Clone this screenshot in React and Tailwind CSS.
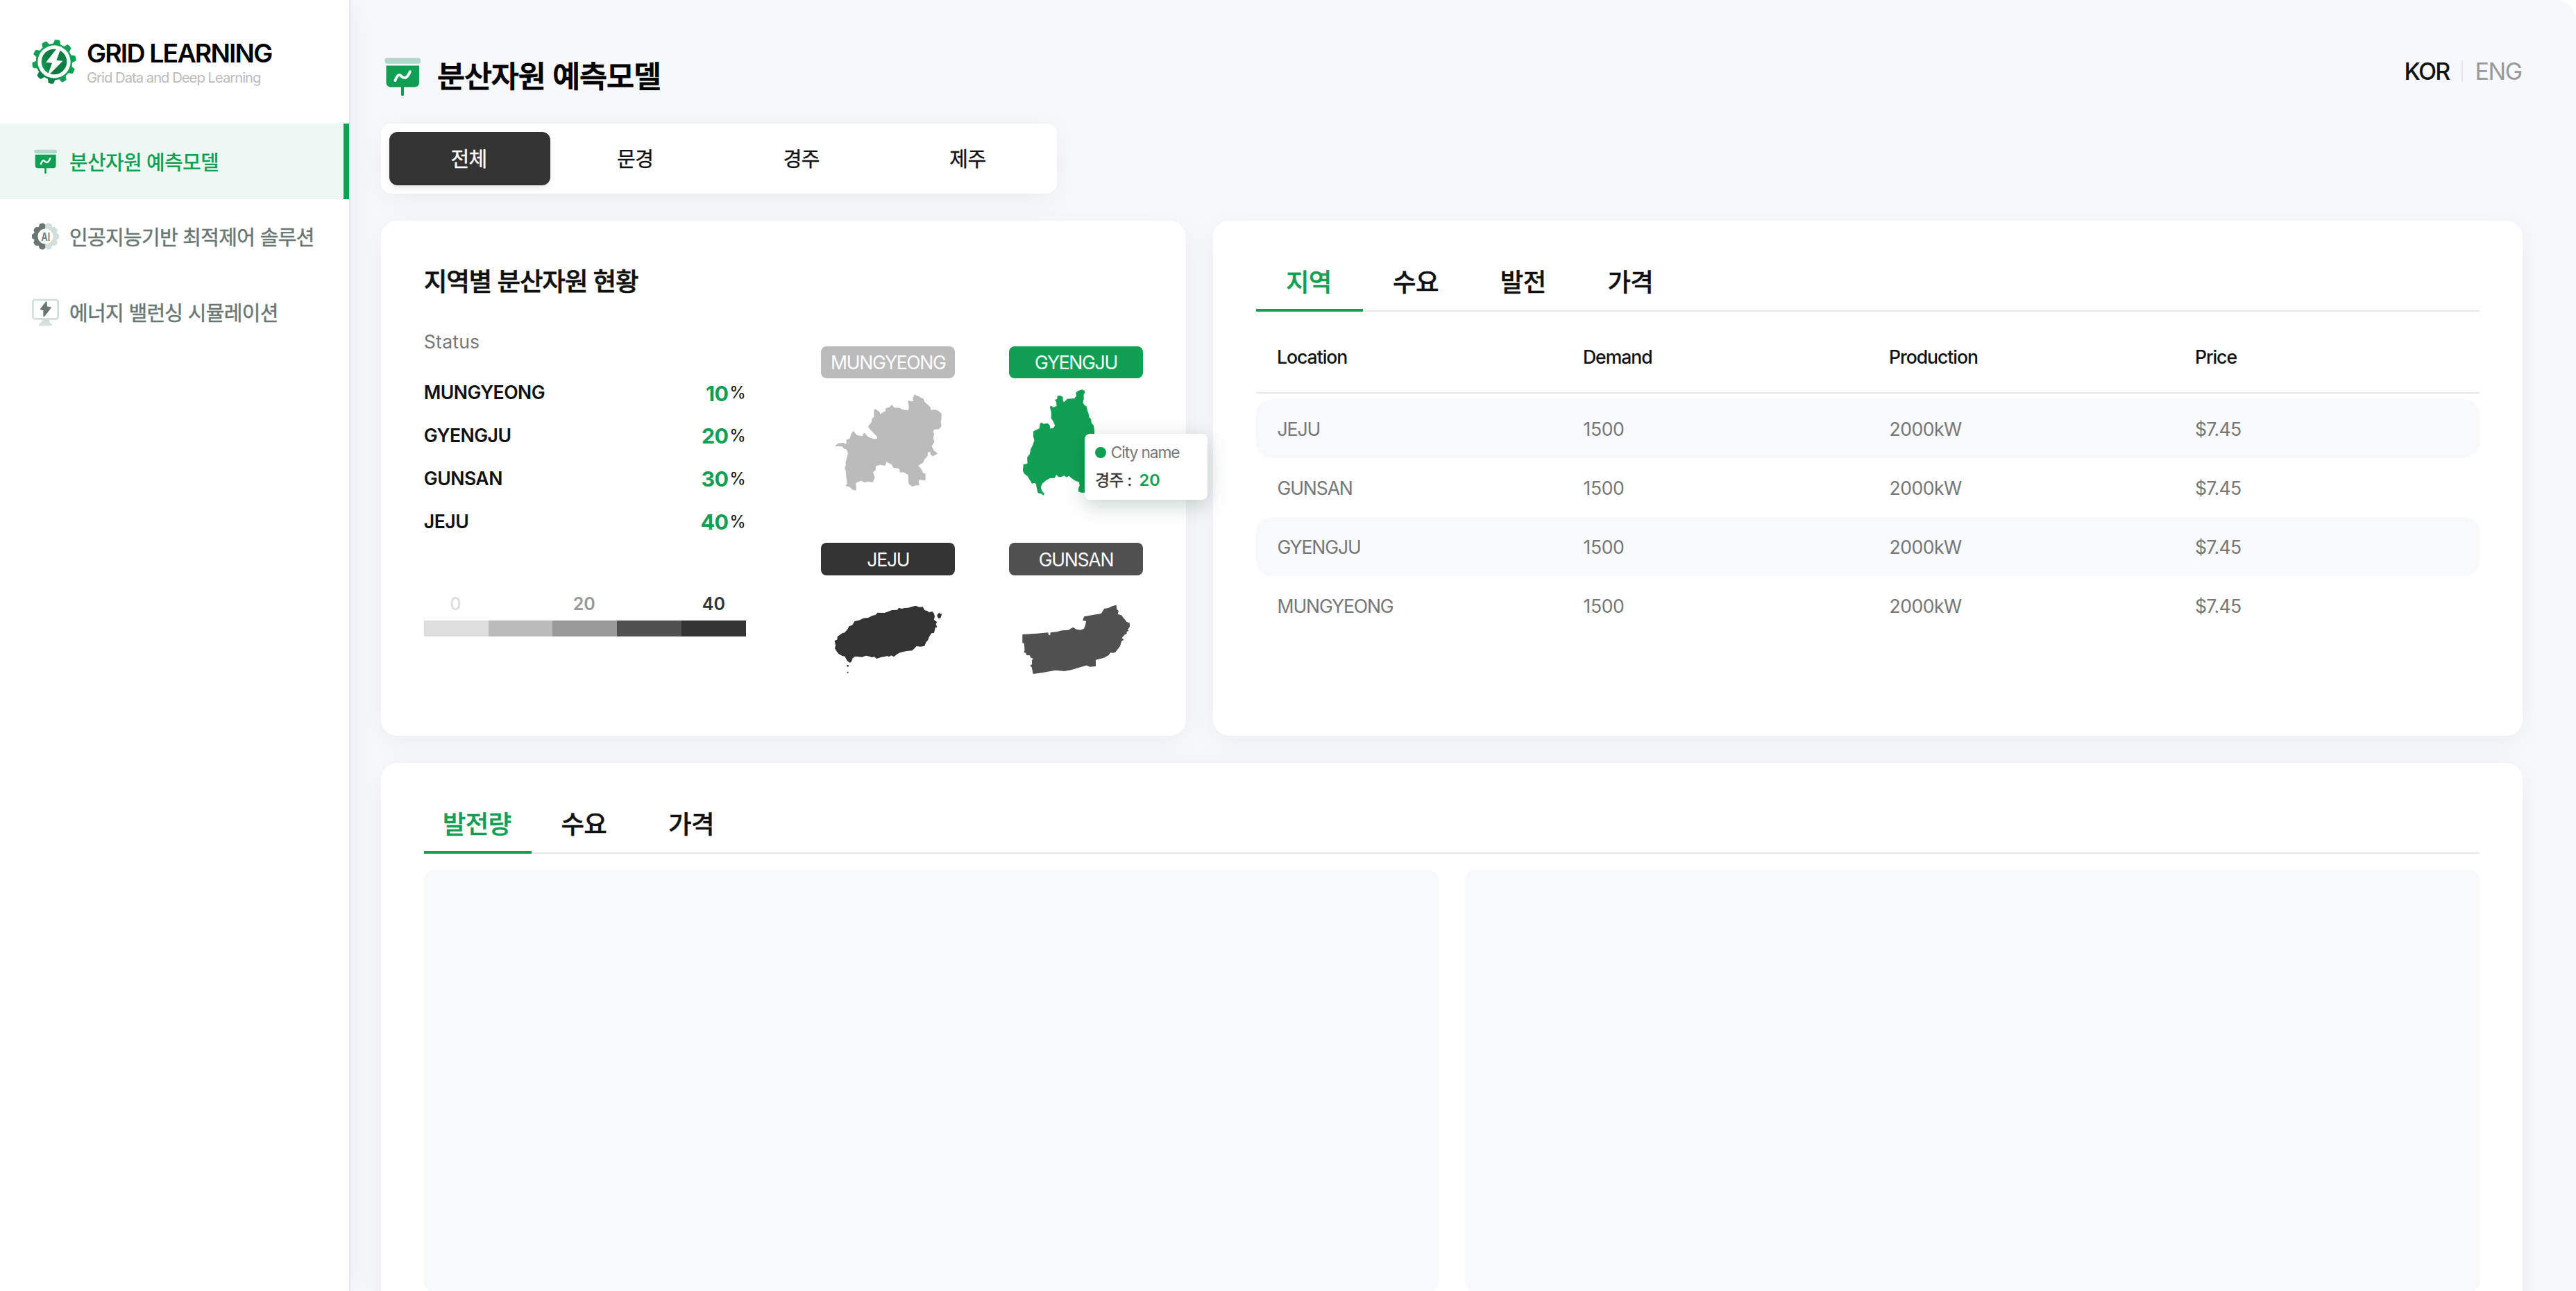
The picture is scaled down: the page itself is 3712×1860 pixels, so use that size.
import React from "react";

const REGIONS = [
  { name: "MUNGYEONG", value: 10 },
  { name: "GYENGJU", value: 20 },
  { name: "GUNSAN", value: 30 },
  { name: "JEJU", value: 40 },
];

const ROWS = ["JEJU", "GUNSAN", "GYENGJU", "MUNGYEONG"];

function BoardIcon({ className }) {
  return (
    <svg viewBox="0 0 24 24" className={className} fill="none">
      <rect x="2.1" y="1.7" width="20" height="3.2" rx="1.2" fill="#b3d7cb" />
      <path d="M2.9 6h18.4v9.6a2.4 2.4 0 0 1-2.4 2.4H5.3a2.4 2.4 0 0 1-2.4-2.4Z" fill="#11a053" />
      <path d="M12 17.5v4.6" stroke="#11a053" strokeWidth="1.6" strokeLinecap="round" />
      <path d="M7.9 14.3c1-2.6 2-3.800 3.200-2.700c1.800 2 3.400 1.800 5.100-2.200" stroke="#fff" strokeWidth="1.500" strokeLinecap="round" strokeLinejoin="round" />
    </svg>
  );
}

const TEETH = [0, 36, 72, 108, 144, 180, 216, 252, 288, 324];

function LogoIcon({ className }) {
  return (
    <svg viewBox="-96 -96 192 192" className={className}>
      <defs>
        <linearGradient id="logo-gear" gradientUnits="userSpaceOnUse" x1="-40" y1="90" x2="10" y2="-20">
          <stop offset="0" stopColor="#0b7a40" />
          <stop offset="0.45" stopColor="#129f54" />
          <stop offset="1" stopColor="#0f9f50" />
        </linearGradient>
        <linearGradient id="logo-core" x1="0" y1="0.7" x2="1" y2="0.3">
          <stop offset="0" stopColor="#12a053" />
          <stop offset="0.35" stopColor="#0b7a40" />
          <stop offset="1" stopColor="#0d8044" />
        </linearGradient>
      </defs>
      <circle r="79" fill="url(#logo-gear)" />
      {TEETH.map((a) => (
        <path
          key={a}
          transform={`rotate(${a + 8.5})`}
          d="M-17-74L-11-94Q0-97 11-94L17-74Z"
          fill={a === 180 || a === 216 ? "#0c8145" : "#11a053"}
        />
      ))}
      <circle r="71" fill="#fff" />
      <circle r="55" fill="url(#logo-core)" />
      <path d="M18-66L-36 3L-9 5L-30 64L38-4L10-6L32-66Z" fill="#fff" />
    </svg>
  );
}

function AiIcon({ className }) {
  return (
    <svg viewBox="-58.5 -58.5 117 117" className={className}>
      <defs>
        <clipPath id="ai-left"><rect x="-60" y="-60" width="60" height="120" /></clipPath>
        <clipPath id="ai-right"><rect x="0" y="-60" width="60" height="120" /></clipPath>
      </defs>
      {[["url(#ai-left)", "#6b7672"], ["url(#ai-right)", "#d2deda"]].map(([clip, color]) => (
        <g key={color} clipPath={clip} fill={color}>
          <circle r="50" />
          {TEETH.map((a) => (
            <path key={a} transform={`rotate(${a + 18})`} d="M-16-46L-9-57Q0-61 9-57L16-46Z" />
          ))}
        </g>
      ))}
      <circle r="33" fill="#fff" />
      <text x="-18" y="18" fontSize="48" fontWeight="600" textLength="38" lengthAdjust="spacingAndGlyphs" fill="#6b7672">AI</text>
    </svg>
  );
}

function MonitorIcon({ className }) {
  return (
    <svg viewBox="138 1288 117 117" className={className}>
      <rect x="142" y="1294" width="109" height="82" rx="9" fill="none" stroke="#d2deda" strokeWidth="8" />
      <path d="M182 1378h30q1 16 8 18q5 1 5 5v4h-57v-4q0-4 5-5q8-2 9-18Z" fill="#d2deda" />
      <path d="M200 1304L177 1334L190 1337L190 1364L218 1328L201 1325Z" fill="#6b7672" stroke="#6b7672" strokeWidth="6" strokeLinejoin="round" />
    </svg>
  );
}

function NavItem({ icon: Icon, label, active }) {
  return (
    <li
      className={
        active
          ? "flex h-[108.3px] items-center gap-[15px] border-r-8 border-[#11a053] bg-[#edf7f4] pl-[46px] font-medium text-[#11a053]"
          : "flex h-[108.3px] items-center gap-[15px] pl-[46px] text-[#6b7773] [-webkit-text-stroke:0.5px]"
      }
    >
      <Icon className="size-[39px]" />
      <span className="pt-[5px] text-[29px] leading-10 tracking-[-0.7px] whitespace-nowrap">{label}</span>
    </li>
  );
}

function Tabs({ items }) {
  return (
    <div className="flex h-[69.6px] border-b-2 border-[#e6e6ee]">
      {items.map((label, i) => (
        <div
          key={label}
          className={
            i === 0
              ? "-mb-[2px] w-[154.67px] border-b-4 border-[#11a053] pr-[2px] text-center text-[36.5px] leading-[55px] font-medium tracking-[-0.7px] text-[#11a053] [-webkit-text-stroke:0.4px]"
              : "w-[154.67px] pr-[3px] text-center text-[36.5px] leading-[55px] font-medium tracking-[-0.7px] text-[#111] [-webkit-text-stroke:0.4px]"
          }
        >
          {label}
        </div>
      ))}
    </div>
  );
}

function Badge({ className, children }) {
  return (
    <div className={`flex h-[46.4px] items-center justify-center rounded-[8px] pt-[2px] text-[26.6px] tracking-[-1.3px] text-white ${className}`}>
      {children}
    </div>
  );
}

function Tooltip() {
  return (
    <div className="absolute top-[126px] left-[109px] z-10 h-[95px] w-[177.5px] rounded-[8px] bg-white pt-[11px] pl-[15.5px] shadow-[0_8px_30px_rgba(0,60,40,0.22)]">
      <div className="flex h-8 items-center gap-[7px]">
        <span className="size-[15.5px] rounded-full bg-[#11a053]" />
        <span className="text-[22.8px] tracking-[-1.13px] text-[#777]">City name</span>
      </div>
      <div className="flex h-[48px] items-center text-[22.5px] text-[#333]">
        <span className="tracking-[-0.5px] [-webkit-text-stroke:0.4px]">경주 :</span>
        <span className="ml-[11px] text-[23.5px] font-semibold text-[#11a053]">20</span>
      </div>
    </div>
  );
}

function RegionMaps() {
  return (
    <div className="mt-[63px] ml-[108.4px] grid grid-cols-[193.33px_193.33px] content-start gap-x-[77.33px] gap-y-[47px]">
      <div>
        <Badge className="bg-[#bbb]">MUNGYEONG</Badge>
        <svg viewBox="69 228 580 570" className="h-[190px] w-full" fill="#bbb">
          <path d="M474 297L482 303L492 305L500 312L512 316L517 330L530 342L543 353L544 365L560 363L576 368L591 382L589 408L587 415L590 435L580 448L558 450L554 458L558 470L555 487L559 503L548 522L557 540L573 552L567 558L552 565L543 558L541 546L531 548L530 564L516 580L510 593L489 606L503 620L511 639L521 640L521 670L493 667L491 677L495 690L480 691L464 696L448 685L446 645L425 634L411 635L407 618L383 615L374 601L352 589L346 606L325 602L307 607L305 625L294 634L302 658L293 677L270 674L258 679L243 671L220 680L221 714L204 709L195 699L175 693L182 683L178 650L176 627L172 617L177 600L175 594L186 552L180 536L170 533L160 523L129 521L143 509L165 507L175 512L180 506L178 495L195 487L198 473L208 455L225 474L248 478L256 463L272 481L295 490L311 490L312 481L274 442L275 432L287 419L289 402L298 396L298 366L305 361L323 374L326 385L334 376L347 371L350 357L366 353L375 342L385 355L410 356L420 363L447 367L449 350L444 325L468 328L466 312Z" />
        </svg>
      </div>
      <div className="relative">
        <Badge className="bg-[#11a053]">GYENGJU</Badge>
        <svg viewBox="70.5 228 580 570" className="h-[190px] w-full" fill="#11a053">
          <path d="M386 277L397 281L398 293L393 297L394 316L390 334L398 345L406 350L410 369L414 379L417 396L425 405L427 421L436 431L440 455L437 520L420 600L412 680L405 722L382 722L370 717L371 702L376 691L372 676L357 671L341 660L330 650L319 656L310 649L294 655L285 655L275 646L267 659L248 660L230 670L213 685L208 700L213 715L223 727L219 735L210 727L195 724L191 706L187 685L180 680L170 684L151 652L137 641L130 628L133 600L150 597L149 570L160 556L164 535L173 517L180 495L175 480L176 457L202 445L205 422L213 420L219 425L237 423L246 430L249 446L263 442L269 432L261 413L253 402L253 374L247 351L254 347L261 354L276 348L275 330L268 322L279 317L279 305L290 302L303 308L304 328L310 330L322 317L353 315L361 305L360 288L372 281Z" />
        </svg>
        <Tooltip />
      </div>
      <div>
        <Badge className="bg-[#333]">JEJU</Badge>
        <svg viewBox="64 206 541.33 510" preserveAspectRatio="none" className="h-[170px] w-full" fill="#333">
          <path d="M445 337L462 343L475 342L482 356L494 360L500 366L513 362L520 370L523 383L520 398L532 407L528 417L533 431L526 430L520 455L510 456L500 472L496 485L488 495L482 511L465 514L450 512L432 531L410 533L384 539L372 546L358 558L348 552L338 558L332 554L322 557L308 559L288 566L280 558L268 560L260 556L245 553L230 559L202 556L192 564L187 579L180 584L170 575L160 556L150 554L135 545L127 534L120 521L123 508L119 488L129 484L131 470L150 456L160 453L172 438L177 426L190 421L200 404L218 400L235 391L255 389L270 381L285 376L292 367L320 368L335 363L350 356L372 355L378 346L390 350L400 347L415 346L430 342Z" />
          <path d="M540 367L545 372L552 372L550 379L546 391L537 391L532 379Z" />
          <circle cx="172" cy="597" r="4" />
          <circle cx="172" cy="625" r="3" />
        </svg>
      </div>
      <div>
        <Badge className="bg-[#505050]">GUNSAN</Badge>
        <svg viewBox="822 206 541.33 510" preserveAspectRatio="none" className="h-[170px] w-full" fill="#505050">
          <path d="M1255 334L1257 352L1264 359L1261 374L1275 378L1297 407L1309 412L1309 428L1301 440L1305 446L1297 449L1297 459L1290 461L1277 477L1285 484L1276 490L1270 512L1251 538L1242 541L1231 540L1224 551L1205 562L1172 571L1172 599L1148 601L1135 595L1100 606L1075 614L1045 620L1010 616L970 624L945 628L919 632L914 604L907 595L915 590L914 574L919 565L910 562L905 551L893 551L890 541L882 539L885 530L883 501L876 496L876 461L935 457L980 453L982 464L988 464L989 453L1015 450L1036 444L1062 442L1080 430L1094 439L1110 442L1124 436L1130 421L1133 403L1119 401L1125 384L1160 377L1194 371L1206 350L1223 347L1240 338Z" />
        </svg>
      </div>
    </div>
  );
}

function StatusCard() {
  return (
    <section className="h-[742.4px] w-[1160px] rounded-[23px] bg-white px-[61.87px] pt-[58px] shadow-[0_8px_40px_rgba(17,17,17,0.05)]">
      <h2 className="text-[36.5px] leading-[61px] font-medium tracking-[-1.2px] text-[#111] [-webkit-text-stroke:0.6px]">지역별 분산자원 현황</h2>
      <div className="-mt-px flex">
        <div className="w-[464px] pt-[35.7px]">
          <p className="text-[26.6px] leading-10 tracking-[0.2px] text-[#777]">Status</p>
          <ul className="mt-[23.8px] text-[#111]">
            {REGIONS.map(({ name, value }) => (
              <li key={name} className="flex h-[61.87px] items-center justify-between">
                <span className="text-[26.6px] font-semibold tracking-[-0.55px]">{name}</span>
                <span className="flex items-center">
                  <span className="text-[30.5px] font-bold tracking-[-0.8px] text-[#11a053]">{value}</span>
                  <span className="ml-[2px] text-[24px]">%</span>
                </span>
              </li>
            ))}
          </ul>
          <div className="mt-[67px] grid grid-cols-5 text-center text-[25px] leading-10 font-semibold">
            <span className="pr-[2px] font-medium text-[#ddd]">0</span>
            <span className="col-start-3 pr-[2px] text-[#999]">20</span>
            <span className="col-start-5 text-[#333]">40</span>
          </div>
          <div className="mt-1 grid h-[23px] grid-cols-5">
            <span className="bg-[#ddd]" />
            <span className="bg-[#bbb]" />
            <span className="bg-[#999]" />
            <span className="bg-[#505050]" />
            <span className="bg-[#333]" />
          </div>
        </div>
        <RegionMaps />
      </div>
    </section>
  );
}

function TableCard() {
  return (
    <section className="h-[742.4px] flex-1 rounded-[23px] bg-white px-[61.87px] pt-[61.87px] shadow-[0_8px_40px_rgba(17,17,17,0.05)]">
      <Tabs items={["지역", "수요", "발전", "가격"]} />
      <div className="mt-[15.5px] grid h-[101.9px] grid-cols-4 items-center border-b-2 border-[#e6e6ee] pt-[1px] text-[26.6px] font-medium tracking-[-1.05px] text-[#111]">
        {["Location", "Demand", "Production", "Price"].map((h) => (
          <span key={h} className="pl-[30.5px]">{h}</span>
        ))}
      </div>
      <div className="mt-[7.7px] text-[26.6px] text-[#777]">
        {ROWS.map((name) => (
          <div key={name} className="grid h-[85.07px] grid-cols-4 items-center rounded-[23px] pt-[3px] odd:bg-[#f8f9fb]">
            <span className="pl-[31px] tracking-[-1.15px]">{name}</span>
            <span className="pl-[31px] tracking-[-0.4px]">1500</span>
            <span className="pl-[31px] tracking-[-0.5px]">2000kW</span>
            <span className="pl-[30.5px] tracking-[-0.6px]">$7.45</span>
          </div>
        ))}
      </div>
    </section>
  );
}

export default function App() {
  return (
    <div className="flex h-[1860px] w-[3712px] overflow-hidden bg-white font-[Inter,'Noto_Sans_CJK_KR',sans-serif]">
      <aside className="z-10 w-[505px] shrink-0 border-r-2 border-[#e6e6ee] bg-white shadow-[0_0_40px_rgba(17,17,17,0.06)]">
        <div className="flex h-[178.4px] gap-[15px] pt-[57px] pl-[46px]">
          <LogoIcon className="size-[64px] shrink-0" />
          <div className="whitespace-nowrap">
            <div className="text-[37.5px] leading-10 font-semibold tracking-[-1.85px] text-black">GRID LEARNING</div>
            <div className="text-[20.3px] leading-[30px] tracking-[-1.02px] text-[#bbb]">Grid Data and Deep Learning</div>
          </div>
        </div>
        <ul>
          <NavItem icon={BoardIcon} label="분산자원 예측모델" active />
          <NavItem icon={AiIcon} label="인공지능기반 최적제어 솔루션" />
          <NavItem icon={MonitorIcon} label="에너지 밸런싱 시뮬레이션" />
        </ul>
      </aside>

      <main className="flex-1 rounded-tr-[31px] bg-[#f7f8fb] pt-[78.6px] pr-[76.8px] pl-[44px]">
        <header className="flex items-start justify-between">
          <div className="flex h-[62px] items-center gap-[19px]">
            <BoardIcon className="size-[62px]" />
            <h1 className="text-[43.5px] leading-[60px] font-medium tracking-[-1.1px] text-black [-webkit-text-stroke:1px]">분산자원 예측모델</h1>
          </div>
          <div className="mt-1 flex items-center text-[34px] leading-10">
            <span className="font-medium tracking-[-1.8px] text-[#111]">KOR</span>
            <span className="mr-[17px] ml-[18px] h-[31px] w-[2px] bg-[#e3e6ee]" />
            <span className="pr-[1.5px] tracking-[-1.4px] text-[#999]">ENG</span>
          </div>
        </header>

        <div className="mt-[37.4px] flex h-[101px] w-[974px] gap-[7.73px] rounded-[15px] bg-white p-[11.6px] text-[29px] leading-[80px] tracking-[-0.6px] text-[#111] shadow-[0_8px_40px_rgba(17,17,17,0.05)]">
          <div className="h-[77.5px] w-[232px] rounded-[12px] bg-[#333] pr-[2px] text-center text-white shadow-[0_4px_8px_rgba(0,0,0,0.08)] [-webkit-text-stroke:0.4px]">전체</div>
          <div className="w-[232px] pr-[2px] text-center [-webkit-text-stroke:0.4px]">문경</div>
          <div className="w-[232px] pr-[2px] text-center [-webkit-text-stroke:0.4px]">경주</div>
          <div className="w-[232px] pr-[2px] text-center [-webkit-text-stroke:0.4px]">제주</div>
        </div>

        <div className="mt-[39px] flex gap-[38.67px]">
          <StatusCard />
          <TableCard />
        </div>

        <section className="mt-[38.67px] h-[830px] rounded-[23px] bg-white px-[61.87px] pt-[61.87px] shadow-[0_8px_40px_rgba(17,17,17,0.05)]">
          <Tabs items={["발전량", "수요", "가격"]} />
          <div className="mt-[23px] grid grid-cols-2 gap-[38.67px]">
            <div className="h-[609px] rounded-[15.5px] bg-[#f8f9fb]" />
            <div className="h-[609px] rounded-[15.5px] bg-[#f8f9fb]" />
          </div>
        </section>
      </main>
    </div>
  );
}
